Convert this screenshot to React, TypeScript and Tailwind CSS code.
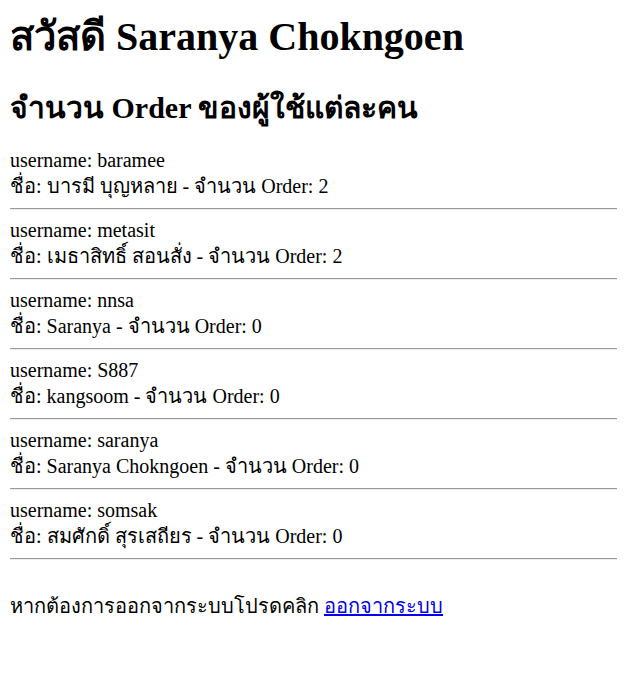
const users = [
  { username: "baramee", name: "บารมี บุญหลาย", orders: 2 },
  { username: "metasit", name: "เมธาสิทธิ์ สอนสั่ง", orders: 2 },
  { username: "nnsa", name: "Saranya", orders: 0 },
  { username: "S887", name: "kangsoom", orders: 0 },
  { username: "saranya", name: "Saranya Chokngoen", orders: 0 },
  { username: "somsak", name: "สมศักดิ์ สุรเสถียร", orders: 0 },
];

const App = () => {
  return (
    <div className="px-[10px] pt-[14px] font-['Liberation_Serif',serif] text-[20px] text-black">
      <h1 className="text-[40px] leading-[46px] font-bold">สวัสดี Saranya Chokngoen</h1>
      <h2 className="mt-[30px] mb-[24px] text-[30px] leading-[35px] font-bold">
        จำนวน Order ของผู้ใช้แต่ละคน
      </h2>
      {users.map((u) => (
        <div key={u.username}>
          <div className="leading-[23px]">username: {u.username}</div>
          <div className="pt-[3px] leading-[23px]">
            ชื่อ: {u.name} - จำนวน Order: {u.orders}
          </div>
          <hr className="mt-[10px] mb-[9px] border-t border-b border-t-[#9a9a9a] border-b-[#eeeeee]" />
        </div>
      ))}
      <p className="mt-[35px] leading-[23px]">
        หากต้องการออกจากระบบโปรดคลิก{" "}
        <a href="#" className="text-[#0000ee] underline">
          ออกจากระบบ
        </a>
      </p>
    </div>
  );
};

export default App;
